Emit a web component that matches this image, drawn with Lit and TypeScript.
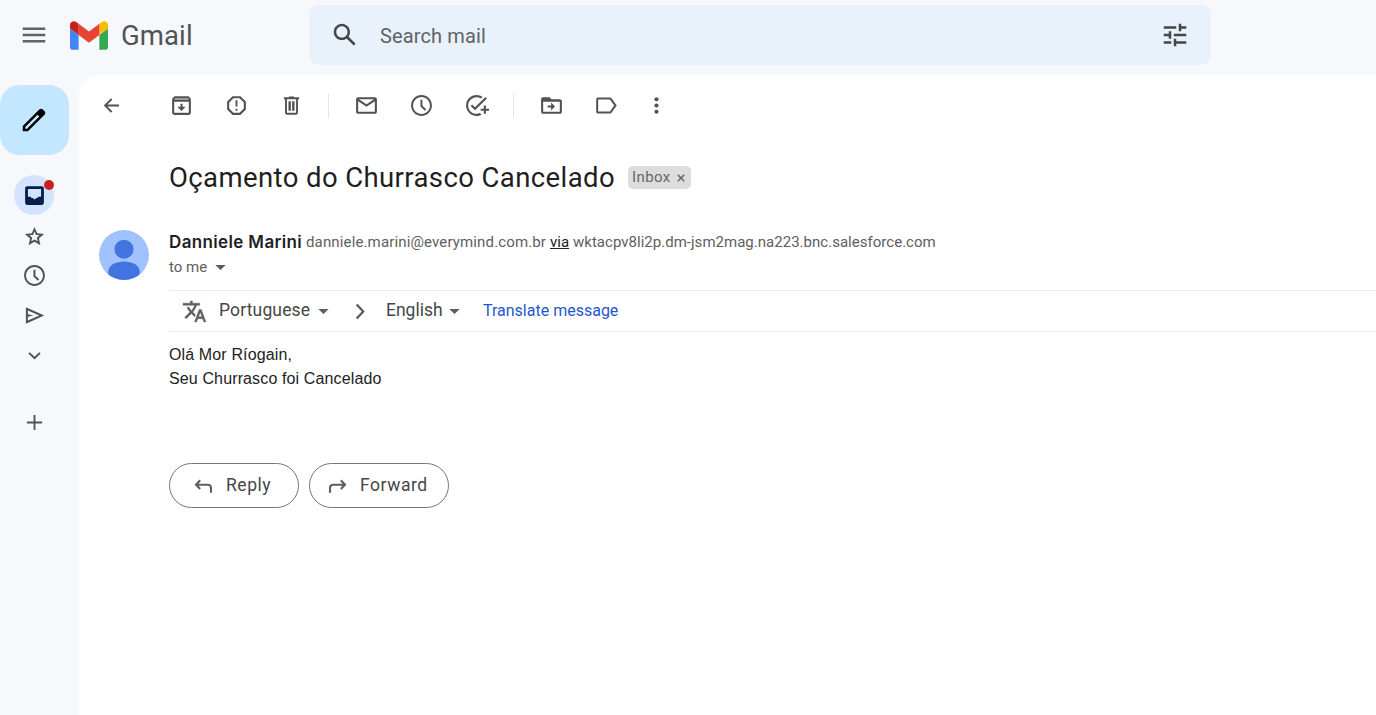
import { LitElement, html, svg, css } from "lit";
import { customElement, property } from "lit/decorators.js";

const glyphs: Record<string, unknown> = {
  menu: svg`<path d="M3 18h18v-2H3v2zm0-5h18v-2H3v2zm0-7v2h18V6H3z"/>`,
  search: svg`<path d="M20.49 19l-5.73-5.73C15.53 12.2 16 10.91 16 9.5 16 5.91 13.09 3 9.5 3S3 5.91 3 9.5 5.91 16 9.5 16c1.41 0 2.7-.47 3.77-1.24L19 20.49 20.49 19zM5 9.5C5 7.01 7.01 5 9.5 5S14 7.01 14 9.5 11.99 14 9.5 14 5 11.99 5 9.5z"/>`,
  tune: svg`<path d="M3 17v2h6v-2H3zM3 5v2h10V5H3zm10 16v-2h8v-2h-8v-2h-2v6h2zM7 9v2H3v2h4v2h2V9H7zm14 4v-2H11v2h10zm-6-4h2V7h4V5h-4V3h-2v6z"/>`,
  edit: svg`<path d="M20.41 4.94l-1.35-1.35c-.78-.78-2.05-.78-2.83 0L3 16.82V21h4.18L20.41 7.77c.79-.78.79-2.05 0-2.83zM6.41 19.06L5 19v-1.36l9.82-9.82 1.41 1.41-9.82 9.83z"/>`,
  back: svg`<path d="M19.2 11.1H8.1l4.700-4.700L11.500 5 4.600 12l6.900 7 1.300-1.400-4.700-4.700h11.100z"/>`,
  archive: svg`<path fill-rule="evenodd" d="M5.2 3h13.6L21 5.6V19a2 2 0 0 1-2 2H5a2 2 0 0 1-2-2V5.6L5.2 3zM5 8.300V19h14V8.300H5z"/><path class="tint" d="M5.600 5h12.800l.6 1.400H5z"/><path d="M11 10.300h2v2.900h3L12 17.200 8 13.200h3z"/>`,
  spam: svg`<path d="M15.730 3H8.270L3 8.270v7.460L8.270 21h7.460L21 15.730V8.270L15.730 3zM19 14.900L14.900 19H9.100L5 14.900V9.100L9.100 5h5.800L19 9.100v5.800z"/><path d="M11.100 7h1.800v6h-1.800zM11.100 15.200h1.800v1.800h-1.800z"/>`,
  trash: svg`<path fill-rule="evenodd" d="M14.500 4V3.300h-5V4H4.700v1.900h1.100V19c0 1 .8 1.800 1.800 1.800h8.800c1 0 1.800-.8 1.800-1.800V5.900h1.100V4zm1.900 15H7.600V5.900h8.800zM9.100 7.900h2.300v9.200H9.100zm3.500 0h2.300v9.200h-2.300z"/>`,
  mail: svg`<path d="M20 4H4c-1.100 0-2 .9-2 2v12c0 1.100.9 2 2 2h16c1.100 0 2-.9 2-2V6c0-1.100-.9-2-2-2zm-.8 2L12 10.800 4.800 6h14.400zM4 18V7.870l8 5.330 8-5.330V18H4z"/>`,
  clock: svg`<path d="M12 2C6.500 2 2 6.500 2 12s4.500 10 10 10 10-4.500 10-10S17.500 2 12 2zm0 18.100c-4.470 0-8.100-3.630-8.100-8.100S7.530 3.900 12 3.900s8.100 3.630 8.100 8.100-3.630 8.100-8.100 8.100zM12.900 6.500H11v6.400l4.200 4.100 1.300-1.300-3.600-3.500z"/>`,
  task: svg`<path d="M22 5.180L10.590 16.600l-4.240-4.240 1.410-1.410 2.830 2.830 10-10L22 5.180zM12 20c-4.410 0-8-3.590-8-8s3.590-8 8-8c1.570 0 3.040.46 4.280 1.250l1.450-1.450C16.100 2.670 14.130 2 12 2 6.480 2 2 6.480 2 12s4.480 10 10 10c1.730 0 3.360-.44 4.780-1.220l-1.500-1.500c-1 .46-2.110.72-3.280.72zm7-5h-3v2h3v3h2v-3h3v-2h-3v-3h-2v3z"/>`,
  move: svg`<path d="M20 6h-8l-2-2H4c-1.100 0-2 .9-2 2v12c0 1.100.9 2 2 2h16c1.100 0 2-.9 2-2V8c0-1.100-.9-2-2-2zm0 12H4V8.500h16V18zm-8.400-1.200L15.400 13l-3.800-3.800v2.800H8.200v2h3.400z"/>`,
  label: svg`<path fill-rule="evenodd" d="M3.900 4.300h11.400c.7 0 1.300.3 1.700.9L21.800 12 17 18.800c-.4.6-1 .9-1.700.9H3.900a1.800 1.800 0 0 1-1.800-1.800V6.100c0-1 .8-1.800 1.800-1.800zM4 6.200v11.600h11.300l4.100-5.800-4.100-5.800z"/>`,
  more: svg`<circle cx="12" cy="6" r="2"/><circle cx="12" cy="12" r="2"/><circle cx="12" cy="18" r="2"/>`,
  inbox: svg`<path d="M19 3H5c-1.100 0-2 .9-2 2v14c0 1.100.9 2 2 2h14c1.100 0 2-.9 2-2V5c0-1.100-.9-2-2-2zm-.7 10.200h-3.100v1.300h-1.500l-1.700 1.300-1.700-1.300H8.800v-1.300H5.700V5.700h12.600z"/>`,
  star: svg`<path fill-rule="evenodd" d="M22 9.300l-7.200-.7L12 2 9.200 8.600 2 9.300l5.400 4.700L5.800 21.200 12 17.400l6.200 3.800-1.600-7.200zM12 15l-3.300 2 .9-3.800-2.900-2.500 3.800-.3L12 6.900l1.500 3.500 3.800.3-2.900 2.500.9 3.800z"/>`,
  send: svg`<path fill-rule="evenodd" d="M3 3.500v17L22.200 12zm2.100 3.200L17 12 5.100 17.300v-3.900L11 12l-5.900-1.400z"/>`,
  down: svg`<path d="M12 16.300L5.600 10 7.100 8.500l4.900 4.800 4.900-4.800 1.500 1.500z"/>`,
  plus: svg`<path d="M19.300 12.900h-6.400v6.400h-1.800v-6.400H4.700v-1.800h6.400V4.700h1.800v6.400h6.400z"/>`,
  caret: svg`<path d="M7 9.500h10l-5 5z"/>`,
  next: svg`<path d="M8.200 4.500l7 7.500-7 7.500 -1.700-1.600L12.200 12 6.500 6.100z"/>`,
  close: svg`<path d="M18.300 7.500L16.500 5.700 12 10.200 7.500 5.700 5.700 7.500l4.500 4.500-4.500 4.500 1.800 1.800 4.500-4.500 4.500 4.500 1.800-1.800-4.500-4.500z"/>`,
  translate: svg`<path class="bold" d="M12.870 15.070l-2.540-2.510.03-.03c1.740-1.940 2.980-4.170 3.710-6.530H17V4h-7V2H8v2H1v1.990h11.170C11.500 7.920 10.440 9.750 9 11.350 8.070 10.320 7.300 9.190 6.690 8h-2c.73 1.630 1.730 3.170 2.980 4.560l-5.090 5.020L4 19l5-5 3.110 3.110.76-2.040zM18.500 10h-2L12 22h2l1.120-3h4.750L21 22h2l-4.500-12zm-2.620 7l1.620-4.330L19.120 17h-3.240z"/>`,
  reply: svg`<path class="line" d="M8.800 7L4.800 11.200l4 4.200M5 11.200h11.200a3 3 0 0 1 3 3v4.700"/>`,
  forward: svg`<path class="line" d="M15.200 7l4 4.200-4 4.200M19 11.200H7.800a3 3 0 0 0-3 3v4.700"/>`,
};

@customElement("mail-icon")
class MailIcon extends LitElement {
  @property() name = "";
  static styles = css`
    :host { display: block; width: 25px; height: 25px; flex: none; }
    svg { display: block; width: 100%; height: 100%; fill: currentColor; }
    .tint { fill: #b5b5b5; }
    .line { fill: none; stroke: currentColor; stroke-width: 2; }
    .bold { stroke: currentColor; stroke-width: 0.4; }
  `;
  render() {
    return html`<svg viewBox="0 0 24 24" aria-hidden="true">${glyphs[this.name]}</svg>`;
  }
}

@customElement("app-root")
class AppRoot extends LitElement {
  static styles = css`
    :host {
      display: grid;
      grid-template: 75px 1fr / 79px 1fr;
      height: 100vh;
      overflow: hidden;
      background: #f6f8fc;
      color: #444746;
      font-family: Roboto, "Liberation Sans", sans-serif;
      white-space: nowrap;
    }
    * { box-sizing: border-box; }
    header { grid-column: 1 / 3; display: flex; align-items: flex-start; }
    .big { width: 30px; height: 30px; }
    .menu { margin: 20px 0 0 19px; color: #5f6368; }
    .logo { display: block; width: 38px; height: 29px; margin: 20.500px 0 0 21px; }
    .brand { width: 188px; margin: 16px 0 0 13px; font-size: 27.5px; line-height: 40px; color: #505355; letter-spacing: 0.1px; }
    .search { display: flex; align-items: center; width: 902px; height: 60px; margin-top: 5px; padding: 0 21px; border-radius: 10px; background: #e9f1fb; }
    .search span { flex: 1; margin-left: 20px; font-size: 20px; line-height: 30px; color: #5f6368; padding-top: 1px; letter-spacing: 0.130px; }

    nav { display: flex; flex-direction: column; align-items: center; width: 69px; padding-top: 10px; }
    .compose { display: grid; place-items: center; width: 69px; height: 70px; padding-right: 1px; border-radius: 20px; background: #c2e7ff; color: #000; }
    .active { position: relative; display: grid; place-items: center; width: 40px; height: 40px; margin: 20px 1px 9px 0; border-radius: 50%; background: #d3e3fd; color: #041e49; }
    .active mail-icon { margin-left: 1px; }
    .dot { position: absolute; top: 5px; right: 0; width: 10px; height: 10px; border-radius: 50%; background: #c5221f; }
    .rail { display: grid; justify-items: center; row-gap: 14.500px; color: #505352; }
    .rail .star { width: 23px; height: 25px; }
    .rail .clock { margin: -1px 0 1px; }
    .rail .send { width: 23px; }
    .rail .down { width: 23px; }
    .add { margin-top: 42px; color: #505352; }

    main { padding-left: 20px; background: #fff; border-top-left-radius: 20px; }
    .tools { display: flex; align-items: center; height: 60px; color: #505352; }
    .tools mail-icon { margin-right: 30px; }
    .tools .back { margin-right: 45px; }
    .tools .end { margin-right: 24px; }
    .tools i { width: 1px; height: 25px; margin-right: 25px; background: #e4e7e8; }
    .tools .label { margin-right: 25px; }

    .subject { display: flex; align-items: center; height: 85px; padding: 0 0 0 70px; }
    h1 { width: 459px; margin: 0; font-size: 27.5px; font-weight: 400; line-height: 35px; color: #1f1f1f; letter-spacing: 0.400px; }
    .chip { display: flex; align-items: center; width: 63px; height: 23px; padding-left: 4px; border-radius: 5px; background: #ddd; color: #666; font-size: 15px; letter-spacing: 0.400px; }
    .chip span { padding-bottom: 2px; }
    .chip mail-icon { width: 14px; height: 14px; margin-left: 3px; }

    .message { display: grid; grid-template-columns: 70px 1fr; padding-top: 10px; }
    .avatar { display: block; width: 50px; height: 50px; }
    .from { display: flex; align-items: center; height: 25px; padding-bottom: 2px; font-size: 15px; color: #5e5e5e; }
    .from b { width: 137px; font: 600 17px Inter, Roboto, sans-serif; color: #1f1f1f; letter-spacing: 0.360px; }
    .email { width: 244px; letter-spacing: 0.140px; }
    .via { width: 23px; color: #222; text-decoration: underline; }
    .domain { letter-spacing: 0.020px; }
    .to { display: flex; align-items: center; height: 25px; font-size: 15px; color: #5e5e5e; }
    .to span { width: 39px; padding-bottom: 2px; }
    .translate { display: flex; align-items: center; height: 42px; margin-top: 10px; padding-left: 13px; border: solid #ebebeb; border-width: 1px 0; font-size: 17.5px; }
    .translate span { padding-bottom: 2px; }
    .translate mail-icon { color: #5e5e5e; }
    .translate .lang { width: 25px; margin-right: 12px; }
    .portuguese { width: 92px; letter-spacing: 0.150px; }
    .english { width: 56px; }
    .translate .next { margin: 1px 12px 0 13px; }
    .link { margin-left: 16px; font-size: 16px; color: #1f57d0; }
    .body { margin-top: 11px; font: 16px/24px "Liberation Sans", Arial, sans-serif; color: #222; letter-spacing: 0.130px; }
    .actions { display: flex; gap: 10px; margin-top: 72px; }
    .actions button { display: flex; align-items: center; width: 130px; height: 45px; padding: 0 0 0 21px; border: 1px solid #747775; border-radius: 23px; background: #fff; color: #444746; font: 450 17.5px Roboto, sans-serif; letter-spacing: 0.550px; }
    .actions button.wide { width: 140px; padding-left: 15px; }
    .actions span { padding-bottom: 2px; }
    .actions mail-icon { margin-right: 10px; color: #5e5e5e; }
  `;

  render() {
    return html`
      <header>
        <mail-icon class="big menu" name="menu"></mail-icon>
        <svg class="logo" viewBox="52 42 88 66" aria-hidden="true">
          <path fill="#4285f4" d="M58 108h14V74L52 59v43c0 3.320 2.690 6 6 6"/>
          <path fill="#34a853" d="M120 108h14c3.320 0 6-2.690 6-6V59l-20 15"/>
          <path fill="#fbbc04" d="M120 48v26l20-15v-8c0-7.420-8.470-11.650-14.400-7.200"/>
          <path fill="#ea4335" d="M72 74V48l24 18 24-18v26L96 92"/>
          <path fill="#c5221f" d="M52 51v8l20 15V48l-5.600-4.200c-5.940-4.450-14.400-.22-14.400 7.200"/>
        </svg>
        <span class="brand">Gmail</span>
        <div class="search">
          <mail-icon class="big" name="search"></mail-icon>
          <span>Search mail</span>
          <mail-icon class="big" name="tune"></mail-icon>
        </div>
      </header>
      <nav>
        <div class="compose"><mail-icon class="big" name="edit"></mail-icon></div>
        <div class="active"><mail-icon name="inbox"></mail-icon><span class="dot"></span></div>
        <div class="rail">
          ${["star", "clock", "send", "down"].map((n) => html`<mail-icon class=${n} name=${n}></mail-icon>`)}
        </div>
        <mail-icon class="add" name="plus"></mail-icon>
      </nav>
      <main>
        <div class="tools">
          <mail-icon class="back" name="back"></mail-icon>
          <mail-icon name="archive"></mail-icon>
          <mail-icon name="spam"></mail-icon>
          <mail-icon class="end" name="trash"></mail-icon>
          <i></i>
          <mail-icon name="mail"></mail-icon>
          <mail-icon name="clock"></mail-icon>
          <mail-icon class="end" name="task"></mail-icon>
          <i></i>
          <mail-icon name="move"></mail-icon>
          <mail-icon class="label" name="label"></mail-icon>
          <mail-icon name="more"></mail-icon>
        </div>
        <div class="subject">
          <h1>Oçamento do Churrasco Cancelado</h1>
          <div class="chip"><span>Inbox</span><mail-icon name="close"></mail-icon></div>
        </div>
        <div class="message">
          <svg class="avatar" viewBox="0 0 50 50" aria-hidden="true">
            <clipPath id="round"><circle cx="25" cy="25" r="25"/></clipPath>
            <g clip-path="url(#round)">
              <path fill="#a0c3ff" d="M0 0h50v50H0z"/>
              <circle cx="25" cy="19.300" r="9.500" fill="#4374e0"/>
              <path fill="#4374e0" d="M9.300 52V41.500C9.300 35 17 31.500 25 31.500S40.700 35 40.700 41.500V52z"/>
            </g>
          </svg>
          <div>
            <div class="from">
              <b>Danniele Marini</b>
              <span class="email">danniele.marini@everymind.com.br</span>
              <span class="via">via</span>
              <span class="domain">wktacpv8li2p.dm-jsm2mag.na223.bnc.salesforce.com</span>
            </div>
            <div class="to"><span>to me</span><mail-icon name="caret"></mail-icon></div>
            <div class="translate">
              <mail-icon class="lang" name="translate"></mail-icon>
              <span class="portuguese">Portuguese</span><mail-icon name="caret"></mail-icon>
              <mail-icon class="next" name="next"></mail-icon>
              <span class="english">English</span><mail-icon name="caret"></mail-icon>
              <span class="link">Translate message</span>
            </div>
            <div class="body">Olá Mor Ríogain,<br>Seu Churrasco foi Cancelado</div>
            <div class="actions">
              <button><mail-icon name="reply"></mail-icon><span>Reply</span></button>
              <button class="wide"><mail-icon name="forward"></mail-icon><span>Forward</span></button>
            </div>
          </div>
        </div>
      </main>
    `;
  }
}
